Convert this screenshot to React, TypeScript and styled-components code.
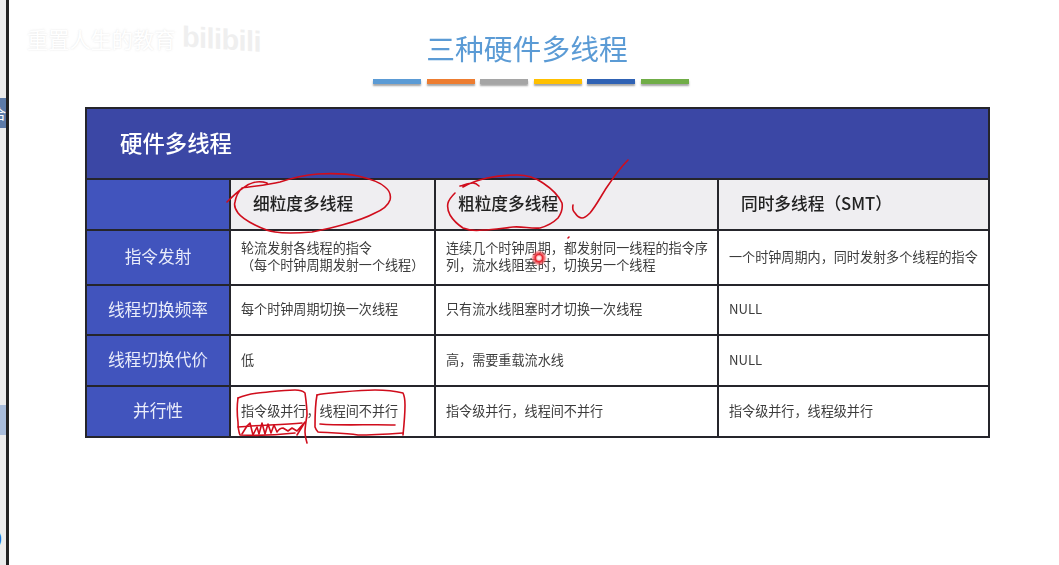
import React from 'react'
import styled, { createGlobalStyle } from 'styled-components'

const CJK = `"Noto Sans CJK SC", "Noto Sans", sans-serif`

const GlobalStyle = createGlobalStyle`
  html, body {
    margin: 0;
    padding: 0;
    background: #fff;
    overflow: hidden;
  }
`

const Page = styled.div`
  position: relative;
  display: flex;
  width: 1059px;
  height: 565px;
  overflow: hidden;
  background: #fff;
  font-family: ${CJK};
`

const SideRail = styled.div`
  flex: none;
  display: flex;
  flex-direction: column;
  width: 9px;
  height: 100%;
  padding-top: 98px;
  box-sizing: border-box;
  background: #ececec;
  border-right: 3px solid #222;
`

const RailTab = styled.div<{ $bg: string; $gap: number }>`
  flex: none;
  width: 6px;
  height: 30px;
  margin-bottom: ${p => p.$gap}px;
  background: ${p => p.$bg};
  color: #fff;
  font-size: 14px;
  line-height: 30px;
  overflow: hidden;
  direction: rtl;
`

const RailParen = styled.div`
  width: 6px;
  height: 16px;
  overflow: hidden;
  color: #1f63d8;
  font-size: 14px;
  font-weight: 700;
  line-height: 16px;
  font-family: "Liberation Sans", sans-serif;
  text-indent: -3px;
`

const Slide = styled.main`
  flex: 1;
  display: flex;
  flex-direction: column;
  padding: 0 69px 0 76px;
`

const Title = styled.h1`
  margin: 28px 0 0;
  padding-right: 21px;
  text-align: center;
  color: #5b9bd5;
  font-size: 28.8px;
  font-weight: 400;
  line-height: 40px;
  filter: blur(0.3px);
`

const ColorBars = styled.div`
  display: flex;
  margin: 11px 0 0 288px;
  gap: 5.6px;
`

const ColorBar = styled.span<{ $color: string }>`
  display: block;
  width: 48px;
  height: 5px;
  background: ${p => p.$color};
  box-shadow: 0 2px 2px rgba(90, 90, 90, 0.55);
`

const Table = styled.div`
  display: grid;
  grid-template-columns: 142px 203px 281px 269px;
  grid-template-rows: 69px 49px 53px 48px 49px 49px;
  gap: 2px;
  width: 905px;
  margin-top: 23px;
  padding: 2px;
  box-sizing: border-box;
  background: #25252b;
`

const Banner = styled.div`
  grid-column: 1 / -1;
  display: flex;
  align-items: center;
  padding: 0 0 3px 33px;
  background: #3b47a5;
  color: #fff;
  font-size: 22.4px;
  font-weight: 500;
  filter: blur(0.25px);
`

const RowHead = styled.div`
  display: flex;
  align-items: center;
  justify-content: center;
  padding-bottom: 3px;
  background: #4154bd;
  color: #e9ecfa;
  font-size: 16.7px;
  filter: blur(0.25px);
`

const ColHead = styled.div`
  display: flex;
  align-items: center;
  padding: 0 0 3px 22px;
  background: #efeef1;
  color: #222;
  font-size: 16.7px;
  font-weight: 500;
  filter: blur(0.25px);
`

const Cell = styled.div`
  display: flex;
  align-items: center;
  padding: 0 4px 3px 10px;
  background: #fff;
  color: #3c3c3c;
  font-size: 13.1px;
  line-height: 17px;
  filter: blur(0.3px);
`

const Watermark = styled.div`
  position: absolute;
  left: 27px;
  top: 26px;
  display: flex;
  align-items: center;
  gap: 7px;
  color: #fff;
  font-size: 21.2px;
  line-height: 26px;
  text-shadow: 0 0 2px rgba(170, 170, 170, 0.35);
`

const WatermarkLogo = styled.span`
  color: #efefef;
  font-family: "Liberation Sans", sans-serif;
  font-size: 29px;
  font-weight: 700;
  letter-spacing: -0.6px;
  text-shadow: none;
  transform: skewY(4deg);
`

const InkLayer = styled.svg`
  position: absolute;
  left: 0;
  top: 0;
  pointer-events: none;
`

const columns = ['细粒度多线程', '粗粒度多线程', '同时多线程（SMT）']

const rows = [
  {
    head: '指令发射',
    cells: [
      <>轮流发射各线程的指令<br />（每个时钟周期发射一个线程）</>,
      '连续几个时钟周期，都发射同一线程的指令序列，流水线阻塞时，切换另一个线程',
      '一个时钟周期内，同时发射多个线程的指令',
    ],
  },
  {
    head: '线程切换频率',
    cells: ['每个时钟周期切换一次线程', '只有流水线阻塞时才切换一次线程', 'NULL'],
  },
  {
    head: '线程切换代价',
    cells: ['低', '高，需要重载流水线', 'NULL'],
  },
  {
    head: '并行性',
    cells: ['指令级并行，线程间不并行', '指令级并行，线程间不并行', '指令级并行，线程级并行'],
  },
]

const barColors = ['#5b9bd5', '#ed7d31', '#a5a5a5', '#ffc000', '#2f62b4', '#70ad47']

// pen strokes the lecturer drew on top of the slide
const inkStrokes = [
  // circle round the first column title
  'M227 202 C232 197 238 191 243 188 C249 183 258 180 267 183 M242 188 C255 186 268 185 280 182 C295 177 306 175 318 174 C335 173 348 174 358 176 C371 179 381 183 385 187 C390 191 391 196 390 200 C388 206 382 210 375 213 C364 219 353 222 342 225 C332 228 322 230 312 232 C300 233 287 234 275 232 C267 231 261 228 255 225 C247 221 241 217 238 213 C235 209 234 205 235 202 C236 196 239 191 242 188',
  // circle round the second column title
  'M460 186 C464 185 469 183 473 183 C476 183 478 185 479 186 M463 187 C470 183 478 180 487 178 C497 176 507 175 517 175 C527 175 536 178 543 183 C552 189 559 196 562 203 C563 209 561 214 558 218 C553 223 547 226 540 228 C531 229 522 226 513 227 C503 228 493 230 483 230 C476 231 468 230 463 228 C457 224 453 220 450 215 C448 211 447 207 448 203 C449 199 452 196 455 193',
  // tick
  'M573 205 C572 209 573 211 575 213 C577 216 580 218 582 218 C585 218 587 216 590 213 C596 206 601 196 607 187 C613 178 620 168 628 160',
  'M568 238 L569 237',
  // box and scribble on the fine grained parallelism text
  'M238 398 C245 395 250 394 258 393 C270 392 283 390 295 390 C300 390 303 391 305 393 C306 400 307 408 307 415 C306 421 305 427 305 432 C305 436 306 440 307 443',
  'M238 398 C237 405 237 414 238 422 C238 426 238 430 240 435 C258 436 278 435 295 433',
  'M238 427 C258 425 282 425 302 423',
  'M242 434 L247 426 L250 423 L253 435 L257 427 L259 434 L262 423 L265 434 L268 424 L271 433 L274 425 L277 432 C279 429 281 428 283 428 L288 431 L292 428 L297 431 L305 422 L297 435',
  // box round the second half of the same text
  'M317 395 C325 393 333 393 342 392 C353 391 364 390 375 390 C385 390 395 391 403 393 C405 397 405 401 405 405 C405 415 404 425 403 435',
  'M317 395 C315 405 315 416 315 427 C316 430 317 431 318 432 C331 433 345 433 358 435 C373 435 388 434 403 433',
  'M320 424 C345 426 370 424 395 425',
]

const App = () => (
  <Page>
    <GlobalStyle />
    <SideRail>
      <RailTab $bg="#5d7ba8" $gap={277}>合</RailTab>
      <RailTab $bg="#a9bddb" $gap={95} />
      <RailParen>)</RailParen>
    </SideRail>
    <Slide>
      <Title>三种硬件多线程</Title>
      <ColorBars>
        {barColors.map(color => (
          <ColorBar key={color} $color={color} />
        ))}
      </ColorBars>
      <Table>
        <Banner>硬件多线程</Banner>
        <RowHead />
        {columns.map(col => (
          <ColHead key={col}>{col}</ColHead>
        ))}
        {rows.map(row => (
          <React.Fragment key={row.head}>
            <RowHead>{row.head}</RowHead>
            {row.cells.map((cell, i) => (
              <Cell key={i}>{cell}</Cell>
            ))}
          </React.Fragment>
        ))}
      </Table>
    </Slide>
    <Watermark>
      <span>重置人生的教育</span>
      <WatermarkLogo>bilibili</WatermarkLogo>
    </Watermark>
    <InkLayer width="1059" height="565" viewBox="0 0 1059 565" fill="none">
      <defs>
        <radialGradient id="pointer">
          <stop offset="0" stopColor="#fff" />
          <stop offset="0.25" stopColor="#fbd0d0" />
          <stop offset="0.45" stopColor="#e8202a" />
          <stop offset="0.75" stopColor="#ee4a50" stopOpacity="0.6" />
          <stop offset="1" stopColor="#ff6060" stopOpacity="0" />
        </radialGradient>
      </defs>
      {inkStrokes.map((d, i) => (
        <path key={i} d={d} stroke="#d00d1c" strokeWidth="1.6" strokeLinecap="round" strokeLinejoin="round" />
      ))}
      <circle cx="539" cy="258" r="8" fill="url(#pointer)" />
    </InkLayer>
  </Page>
)

export default App
